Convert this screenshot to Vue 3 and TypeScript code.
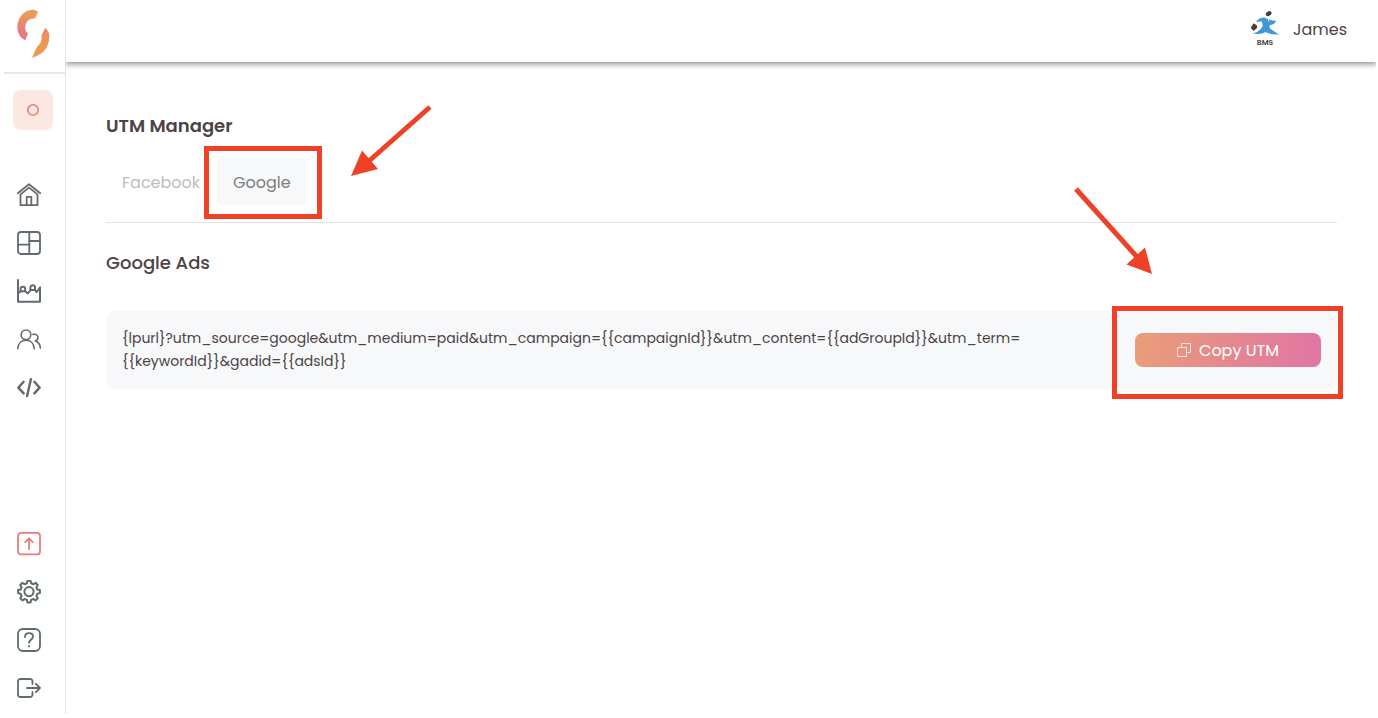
<script setup lang="ts">
import { ref } from 'vue'

type Tab = 'Facebook' | 'Google'

const activeTab = ref<Tab>('Google')

const utmLines: string[] = [
  '{lpurl}?utm_source=google&utm_medium=paid&utm_campaign={{campaignId}}&utm_content={{adGroupId}}&utm_term=',
  '{{keywordId}}&gadid={{adsId}}',
]

function gearPath(cx: number, cy: number, outer: number, root: number): string {
  const points: string[] = []
  for (let tooth = 0; tooth < 8; tooth++) {
    const base = tooth * 45
    const corners: [number, number][] = [[-14, root], [-8, outer], [8, outer], [14, root]]
    for (const [offset, radius] of corners) {
      const angle = ((base + offset) * Math.PI) / 180
      points.push(`${(cx + radius * Math.sin(angle)).toFixed(2)} ${(cy - radius * Math.cos(angle)).toFixed(2)}`)
    }
  }
  return `M${points.join('L')}Z`
}

const gear = gearPath(12, 11.6, 11, 8.6)

interface NavItem {
  label: string
  paths: string[]
  tone?: string
}

const mainNav: NavItem[] = [
  { label: 'Home', tone: 'warm', paths: ['M.8 10.2 12 1.2l11.2 9', 'M3.5 11.4V22.2h17V11.4L12 4.6Z', 'M9.7 22v-8.2h4.6V22'] },
  { label: 'Dashboard', paths: ['M4 1h16a3 3 0 0 1 3 3v16a3 3 0 0 1-3 3H4a3 3 0 0 1-3-3V4a3 3 0 0 1 3-3Z', 'M12.3 1v22', 'M1 13.7h11.3', 'M12.3 10H23'] },
  { label: 'Analytics', tone: 'bold', paths: ['M1 1v21.7h22V8.6', 'M1 14.2 3.6 12.4V10a2.300 2.300 0 0 1 4.600 0v2.200l2.600 2.200 2.600-3V8.600a2.300 2.300 0 0 1 4.600 0v2.600l1.600 1.800L23 8.600', 'M3.600 12.200h4M13.400 11h4'] },
  { label: 'Audience', tone: 'warm thin', paths: ['M9 3a4.8 4.8 0 1 1 0 9.6A4.8 4.8 0 0 1 9 3Z', 'M.8 21.6C1 16.4 4.4 13.200 9 13.200s8 3.2 8.200 8.400', 'M16 7.400c3-.6 5 .9 5 3.200 0 1.900-1.200 2.900-2.600 3.400C21.600 15.200 23.200 17.600 23.300 21.100'] },
  { label: 'Tracking code', tone: 'warm heavy', paths: ['M6.600 6.800 1.400 12.600l5.200 5.800', 'M17.400 6.800 22.600 12.600l-5.200 5.800', 'M13.900 4.200 10.100 21'] },
]

const footNav: NavItem[] = [
  { label: 'Upgrade', tone: 'accent', paths: ['M4 .900h16a3 3 0 0 1 3 3v15.500a3 3 0 0 1-3 3H4a3 3 0 0 1-3-3V3.900a3 3 0 0 1 3-3Z', 'M12 17V6.500M8.200 10.100 12 6.300l3.800 3.800'] },
  { label: 'Settings', tone: 'bold', paths: [gear, 'M12 7a4.600 4.600 0 1 1 0 9.200A4.600 4.600 0 0 1 12 7Z'] },
  { label: 'Help', paths: ['M6 1h12a5 5 0 0 1 5 5v12a5 5 0 0 1-5 5H6a5 5 0 0 1-5-5V6a5 5 0 0 1 5-5Z', 'M8 9c0-2.400 1.700-3.900 4-3.900s4 1.400 4 3.500c0 3.200-4 3.200-4 6.200', 'M12 17.900v.600'] },
  { label: 'Log out', paths: ['M15.500 8V5.500a2.500 2.500 0 0 0-2.500-2.500H3.500A2.500 2.500 0 0 0 1 5.500v13A2.500 2.500 0 0 0 3.500 21H13a2.500 2.500 0 0 0 2.500-2.500V16', 'M10 12h13M18.800 7.800 23 12l-4.200 4.200'] },
]

function copyUtm(): void {
  void navigator.clipboard?.writeText(utmLines.join(''))
}
</script>

<template>
  <div class="app">
    <aside class="sidebar">
      <a class="logo" href="#" aria-label="Start page">
        <svg viewBox="50 28 99 147" width="33" height="49" aria-hidden="true">
          <defs>
            <linearGradient id="markLeft" x1="0.7" y1="0" x2="0.3" y2="1">
              <stop offset="0.2" stop-color="#ec9a57" />
              <stop offset="1" stop-color="#e5738c" />
            </linearGradient>
            <linearGradient id="markRight" x1="0" y1="0" x2="0" y2="1">
              <stop offset="0" stop-color="#e98a60" />
              <stop offset="0.6" stop-color="#ec9a50" />
            </linearGradient>
          </defs>
          <path fill="url(#markLeft)" d="M113 37C108 31 102 30 96 30C70 31 51 55 51 82C51 100 60 115 75 122L83 101C77 97 74 90 75 81C76 66 87 56 104 56Z" />
          <path fill="url(#markRight)" d="M134 85C143 91 148 101 147 113C146 146 124 168 95 174C101 162 106 144 116 135C125 127 125 113 123 109Z" />
        </svg>
      </a>
      <button class="workspace" type="button" aria-label="Workspace O">
        <svg viewBox="0 0 12 12" width="12" height="12" aria-hidden="true">
          <defs>
            <linearGradient id="ring" x1="0" y1="0" x2="0" y2="1">
              <stop offset="0" stop-color="#df7597" />
              <stop offset="1" stop-color="#ec8d6c" />
            </linearGradient>
          </defs>
          <circle cx="6" cy="6" r="5.200" fill="none" stroke="url(#ring)" stroke-width="1.600" />
        </svg>
      </button>
      <nav class="nav" aria-label="Main">
        <a v-for="item in mainNav" :key="item.label" href="#" :aria-label="item.label" :class="item.tone">
          <svg viewBox="0 0 24 24" width="24" height="24" aria-hidden="true">
            <path v-for="d in item.paths" :key="d" :d="d" />
          </svg>
        </a>
      </nav>
      <nav class="nav nav-foot" aria-label="Account">
        <a v-for="item in footNav" :key="item.label" href="#" :aria-label="item.label" :class="item.tone">
          <svg viewBox="0 0 24 24" width="24" height="24" aria-hidden="true">
            <path v-for="d in item.paths" :key="d" :d="d" />
          </svg>
        </a>
      </nav>
    </aside>

    <div class="page">
      <header class="topbar">
        <svg class="avatar" viewBox="60 34 90 108" width="30" height="36" aria-hidden="true">
          <ellipse cx="116" cy="42" rx="9" ry="6.500" transform="rotate(-32 116 42)" fill="#45403e" />
          <path d="M71 71 80 77 82 84 71 94 62 84Z" fill="#45403e" />
          <path fill="#3f97d8" d="M78 68C84 58 94 52 105 54L113 58L118 69L117 58L124 62L139 64L131 73L119 77L119 86C130 94 139 99 147 105C131 105 116 103 107 97C98 102 84 105 69 101C84 98 93 89 98 80L96 66C91 64 85 66 78 68Z" />
          <text x="105" y="137" text-anchor="middle" class="avatar-text">BMS</text>
        </svg>
        <span class="user">James</span>
      </header>

      <main class="content">
        <h1>UTM Manager</h1>
        <div class="tabs" role="tablist">
          <button class="tab" type="button" role="tab" :aria-selected="activeTab === 'Facebook'" @click="activeTab = 'Facebook'">Facebook</button>
          <div class="marked">
            <button class="tab" type="button" role="tab" :aria-selected="activeTab === 'Google'" @click="activeTab = 'Google'">Google</button>
            <span class="frame frame-tab"></span>
            <svg class="arrow arrow-tab" viewBox="0 0 82 72" width="82" height="72" aria-hidden="true">
              <path d="M79 2 18 56" />
              <path class="head" d="M0 71 11 45.500 27 64Z" />
            </svg>
          </div>
        </div>

        <h2>Google Ads</h2>
        <section class="card">
          <code class="utm"><span v-for="line in utmLines" :key="line">{{ line }}</span></code>
          <div class="marked">
            <button class="copy" type="button" @click="copyUtm">
              <svg viewBox="0 0 14 14" width="14" height="14" aria-hidden="true">
                <path d="M.5 4.500h9v9h-9ZM4.500 4.500v-4h9v9h-4" />
              </svg>
              Copy UTM
            </button>
            <span class="frame frame-copy"></span>
            <svg class="arrow arrow-copy" viewBox="0 0 80 88" width="80" height="88" aria-hidden="true">
              <path d="M2 2 64 71" />
              <path class="head" d="M78 87 71 60.500 52.500 77.500Z" />
            </svg>
          </div>
        </section>
      </main>
    </div>
  </div>
</template>

<style>
body {
  margin: 0;
  background: #fff;
}
</style>

<style scoped>
.app {
  box-sizing: border-box;
  display: flex;
  min-height: 100vh;
  padding: 0 2px 4px 0;
  background: #fff;
  color: #4d4343;
  font-family: Poppins, Inter, "Liberation Sans", sans-serif;
}

button {
  border: 0;
  padding: 0;
  font: inherit;
  cursor: pointer;
}

.sidebar {
  position: relative;
  z-index: 1;
  box-sizing: border-box;
  display: flex;
  flex-direction: column;
  flex: none;
  width: 66px;
  border-right: 1px solid #e2e2e2;
  background: #fff;
}

.logo {
  display: flex;
  box-sizing: border-box;
  height: 74px;
  margin-left: 4px;
  padding: 9px 0 0 13px;
  border-bottom: 2px solid #e8e8e8;
}

.workspace {
  display: grid;
  place-items: center;
  width: 40px;
  height: 40px;
  margin: 16px 0 0 13px;
  border-radius: 8px;
  background: #fae8e1;
}

.nav {
  display: flex;
  flex-direction: column;
  gap: 24px;
  margin: 53px 0 0 17px;
}

.nav-foot {
  margin-top: auto;
  margin-bottom: 14px;
}

.nav a {
  width: 24px;
  height: 24px;
  color: #5f6b6d;
}

.nav svg {
  display: block;
  fill: none;
  stroke: currentColor;
  stroke-width: 1.8;
  stroke-linecap: round;
  stroke-linejoin: round;
}

.nav .warm {
  color: #6c6867;
}

.nav .accent {
  color: #e87d7b;
}

.nav .thin svg {
  stroke-width: 1.6;
}

.nav .bold svg {
  stroke-width: 2;
}

.nav .heavy svg {
  stroke-width: 2.4;
}

.page {
  flex: 1;
  min-width: 0;
}

.topbar {
  box-sizing: border-box;
  display: flex;
  align-items: center;
  justify-content: flex-end;
  gap: 13px;
  height: 62px;
  padding: 0 29px 4px 0;
  background: #fff;
  box-shadow: 0 1px 6px 1px rgba(0, 0, 0, 0.45);
  clip-path: inset(0 0 -12px 0);
}

.avatar-text {
  font-size: 23px;
  font-weight: 600;
  fill: #45403e;
}

.user {
  font-size: 16px;
}

.content {
  padding: 52px 39px 0 40px;
}

h1,
h2 {
  margin: 0;
  font-size: 18px;
  line-height: 24px;
  font-weight: 600;
}

h2 {
  margin-top: 28px;
  font-weight: 500;
}

.tabs {
  display: flex;
  gap: 1px;
  padding: 20px 0 16px;
  border-bottom: 1px solid #e4e4e4;
}

.marked {
  position: relative;
  flex: none;
}

.tab {
  height: 48px;
  padding: 0 16px;
  border-radius: 6px;
  background: transparent;
  color: #bdbdbd;
  font-size: 16px;
}

.tab[aria-selected="true"] {
  background: #f7f8fa;
  color: #7e7e7e;
}

.frame {
  position: absolute;
  border: 5px solid #ee4127;
  pointer-events: none;
}

.frame-tab {
  inset: -12px -15px -13px -13px;
}

.frame-copy {
  inset: -27px -22px -32px -23px;
}

.arrow {
  position: absolute;
  fill: none;
  stroke: #ee4127;
  stroke-width: 5;
  pointer-events: none;
}

.arrow .head {
  fill: #ee4127;
  stroke: none;
}

.arrow-tab {
  top: -53px;
  left: 134px;
}

.arrow-copy {
  top: -146px;
  left: -61px;
}

.card {
  display: flex;
  align-items: center;
  justify-content: space-between;
  gap: 16px;
  margin-top: 36px;
  padding: 16px;
  border-radius: 10px;
  background: #f7f8fa;
}

.utm {
  min-width: 0;
  font-family: inherit;
  font-size: 14px;
  line-height: 23px;
  overflow-wrap: anywhere;
}

.utm span {
  display: block;
}

.copy {
  display: flex;
  align-items: center;
  justify-content: center;
  gap: 8px;
  width: 186px;
  height: 34px;
  border-radius: 8px;
  background: linear-gradient(100deg, #ea9e77, #e58a8c 45%, #e075a5);
  color: #fff;
  font-size: 16px;
}

.copy svg {
  fill: none;
  stroke: #fbe3dc;
  stroke-width: 1;
}
</style>
